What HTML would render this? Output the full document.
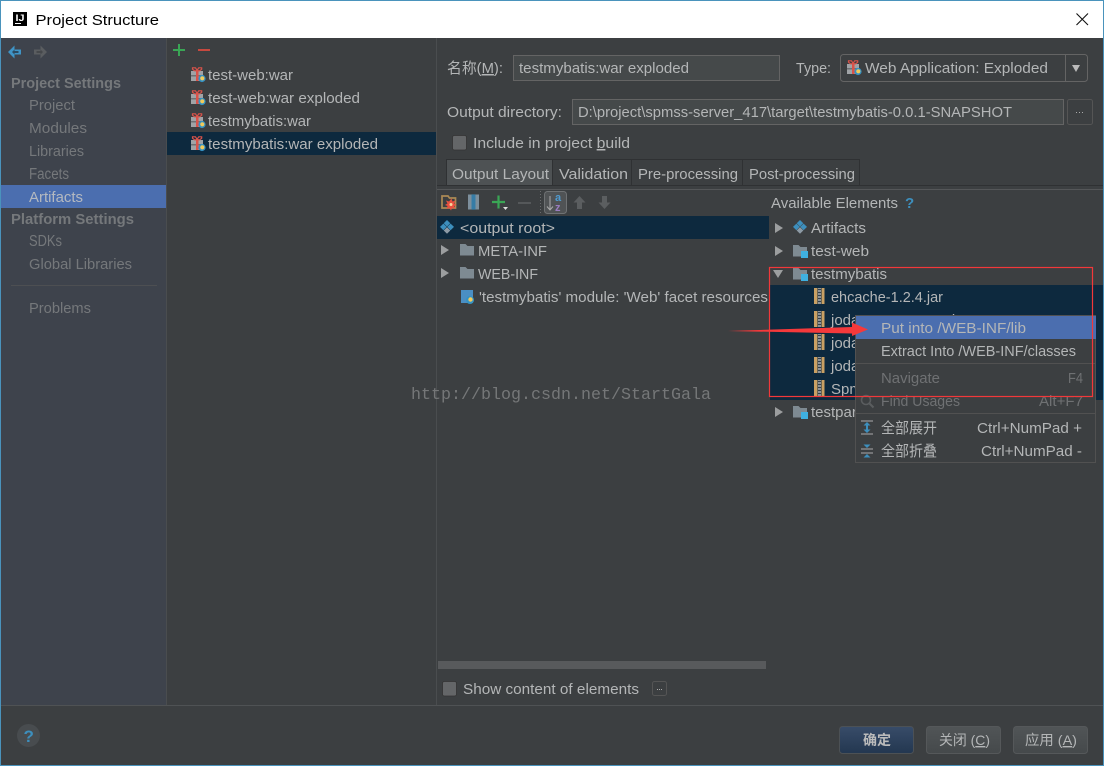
<!DOCTYPE html>
<html><head><meta charset="utf-8"><title>Project Structure</title>
<style>
html,body{margin:0;padding:0;background:#3c3f41;width:1104px;height:766px;overflow:hidden}
svg{display:block}
text{font-family:"Liberation Sans","Noto Sans CJK SC",sans-serif;font-size:15px;fill:#b4b6b7}
.s{fill:#75787b}
.h{fill:#75787b;font-weight:bold}
.d{fill:#6f7173}
</style></head><body>
<svg width="1104" height="766" viewBox="0 0 1104 766" xmlns="http://www.w3.org/2000/svg">
<defs>
<g id="gift">
<rect x="0" y="4" width="12" height="10" fill="#a0a3a6"/>
<rect x="0" y="8" width="12" height="1.500" fill="#6e7073"/>
<rect x="5" y="3" width="2.500" height="11" fill="#d9534a"/>
<path d="M1.500 0.800h3l1.600 2.600 1.600-2.600h3v1.400l-2 1.600h-5.200l-2-1.600z" fill="none" stroke="#d9534a" stroke-width="1.200"/>
<circle cx="11" cy="11.500" r="3.600" fill="#3592c4"/>
<circle cx="11.300" cy="11.300" r="2.100" fill="#f2ca5b"/>
</g>
<g id="dia">
<path d="M7 0l3.300 3.300L7 6.600 3.700 3.300z" fill="#3d8fbd"/>
<path d="M3.400 3.600l3.300 3.300-3.300 3.300L0 6.900z" fill="#3d8fbd"/>
<path d="M10.600 3.600l3.400 3.300-3.400 3.300-3.300-3.300z" fill="#3d8fbd"/>
<path d="M7 7.200l3.300 3.300L7 13.800l-3.300-3.300z" fill="#8d9aa5"/>
</g>
<path id="fold" d="M0 0h5.500l2 2H14v9.500H0z" fill="#7e8a92"/>
<g id="mod"><path d="M0 0h5.500l2 2H14v9.500H0z" fill="#7e8a92"/><rect x="8" y="6" width="7" height="7" fill="#3fb0e0"/></g>
<g id="jar"><rect x="0" y="0" width="3.500" height="16" fill="#c9a063"/><rect x="4" y="0" width="3" height="16" fill="#8f9396"/><path d="M4 1.500h3M4 4.500h3M4 7.500h3M4 10.500h3M4 13.500h3" stroke="#33404a" fill="none"/><rect x="7.500" y="0" width="3" height="16" fill="#c9a063"/></g>
<path id="tr" d="M0 0l8 5-8 5z" fill="#9c9e9f"/>
</defs>

<!-- window -->
<rect width="1104" height="766" fill="#3c3f41"/>
<rect x="0" y="0" width="1104" height="38" fill="#ffffff"/>
<rect x="13" y="12" width="14" height="14" fill="#000"/>
<text x="15.500" y="21" style="font-size:9px;font-weight:bold;fill:#fff" textLength="9" lengthAdjust="spacingAndGlyphs">IJ</text>
<rect x="15" y="23" width="6" height="1" fill="#fff"/>
<text x="35.500" y="25" style="fill:#000" textLength="123.500" lengthAdjust="spacingAndGlyphs">Project Structure</text>
<path d="M1076.500 13.500l11.500 11.500M1088 13.500l-11.500 11.500" stroke="#111" stroke-width="1.100" fill="none"/>

<!-- sidebar -->
<rect x="1" y="38" width="165" height="667" fill="#3e434c"/>
<rect x="166" y="38" width="1" height="667" fill="#4a4d4f"/>
<rect x="1" y="185" width="165" height="23" fill="#4b6eaf"/>
<path d="M8 52l6.500-6.500v4h6.500v5h-6.500v4z" fill="#3f94c6"/><path d="M12 52l2.500-2.500v1.500h4v2h-4v1.500z" fill="#2c4a60"/>
<path d="M47 52l-6.500-6.500v4h-6.500v5h6.500v4z" fill="#5a5d60"/><path d="M43 52l-2.500-2.500v1.500h-4v2h4v1.500z" fill="#45484b"/>
<text class="h" x="11" y="88" textLength="110" lengthAdjust="spacingAndGlyphs">Project Settings</text>
<text class="s" x="29" y="110" textLength="46" lengthAdjust="spacingAndGlyphs">Project</text>
<text class="s" x="29" y="133" textLength="58" lengthAdjust="spacingAndGlyphs">Modules</text>
<text class="s" x="29" y="156" textLength="55" lengthAdjust="spacingAndGlyphs">Libraries</text>
<text class="s" x="29" y="179" style="font-size:15.500px" textLength="40" lengthAdjust="spacingAndGlyphs">Facets</text>
<text x="29" y="202" style="fill:#b4b9c0" textLength="54" lengthAdjust="spacingAndGlyphs">Artifacts</text>
<text class="h" x="11" y="224" textLength="123" lengthAdjust="spacingAndGlyphs">Platform Settings</text>
<text class="s" x="29" y="246" style="font-size:15.500px" textLength="33" lengthAdjust="spacingAndGlyphs">SDKs</text>
<text class="s" x="29" y="269" textLength="103" lengthAdjust="spacingAndGlyphs">Global Libraries</text>
<rect x="11" y="285" width="146" height="1" fill="#4d4f52"/>
<text class="s" x="29" y="313" textLength="62" lengthAdjust="spacingAndGlyphs">Problems</text>

<!-- middle list -->
<path d="M173 50h12M179 44v12" stroke="#3aa655" stroke-width="2" fill="none"/>
<rect x="198" y="49" width="12" height="2" fill="#c7493f"/>
<rect x="167" y="132" width="269" height="23" fill="#0d293e"/>
<use href="#gift" x="191" y="67"/><use href="#gift" x="191" y="90"/><use href="#gift" x="191" y="113"/><use href="#gift" x="191" y="136"/>
<text x="208" y="80" textLength="85" lengthAdjust="spacingAndGlyphs">test-web:war</text>
<text x="208" y="103" textLength="152" lengthAdjust="spacingAndGlyphs">test-web:war exploded</text>
<text x="208" y="126" textLength="103" lengthAdjust="spacingAndGlyphs">testmybatis:war</text>
<text x="208" y="149" textLength="170" lengthAdjust="spacingAndGlyphs">testmybatis:war exploded</text>
<rect x="436" y="38" width="1" height="667" fill="#4a4d4f"/>

<!-- form -->
<text x="447" y="73" textLength="56" lengthAdjust="spacingAndGlyphs">名称(<tspan style="text-decoration:underline">M</tspan>):</text>
<rect x="513.500" y="55.500" width="266" height="25" fill="#45494a" stroke="#646464"/>
<text x="519" y="73" textLength="170" lengthAdjust="spacingAndGlyphs">testmybatis:war exploded</text>
<text x="796" y="73" textLength="35" lengthAdjust="spacingAndGlyphs">Type:</text>
<rect x="840.500" y="54.500" width="247" height="27" rx="3" fill="#3c3f41" stroke="#646464"/>
<rect x="1065" y="55" width="1" height="26" fill="#646464"/>
<use href="#gift" x="847" y="60"/>
<text x="865" y="73" textLength="183" lengthAdjust="spacingAndGlyphs">Web Application: Exploded</text>
<path d="M1072 65h8l-4 7z" fill="#bbbbbb"/>
<text x="447" y="117" textLength="115" lengthAdjust="spacingAndGlyphs">Output directory:</text>
<rect x="572.500" y="99.500" width="491" height="25" fill="#45494a" stroke="#646464"/>
<text x="578" y="117" textLength="434" lengthAdjust="spacingAndGlyphs">D:\project\spmss-server_417\target\testmybatis-0.0.1-SNAPSHOT</text>
<rect x="1067.500" y="99.500" width="25" height="25" rx="2" fill="#3c3f41" stroke="#555"/>
<rect x="1076" y="112" width="1" height="1" fill="#aaa"/><rect x="1079" y="112" width="1" height="1" fill="#aaa"/><rect x="1082" y="112" width="1" height="1" fill="#aaa"/>
<rect x="452.500" y="135.500" width="14" height="14.500" rx="2" fill="#646668" stroke="#333" stroke-width=".8"/>
<text x="473" y="148" textLength="157" lengthAdjust="spacingAndGlyphs">Include in project <tspan style="text-decoration:underline">b</tspan>uild</text>

<!-- tabs -->
<rect x="446.500" y="159.500" width="106" height="26" fill="#4e5254" stroke="#2f3133"/>
<rect x="552.500" y="159.500" width="79" height="26" fill="#3c3f41" stroke="#2f3133"/>
<rect x="631.500" y="159.500" width="111" height="26" fill="#3c3f41" stroke="#2f3133"/>
<rect x="742.500" y="159.500" width="117" height="26" fill="#3c3f41" stroke="#2f3133"/>
<rect x="437" y="185" width="667" height="1" fill="#2f3133"/>
<rect x="437" y="189" width="667" height="1" fill="#555759"/>
<text x="452" y="179" textLength="97" lengthAdjust="spacingAndGlyphs">Output Layout</text>
<text x="559" y="179" textLength="69" lengthAdjust="spacingAndGlyphs">Validation</text>
<text x="638" y="179" textLength="100" lengthAdjust="spacingAndGlyphs">Pre-processing</text>
<text x="749" y="179" textLength="106" lengthAdjust="spacingAndGlyphs">Post-processing</text>

<!-- toolbar -->
<path d="M442 196h6l1.500 2h6v10h-13.500z" fill="#3c3f41" stroke="#ab8a55" stroke-width="1.700"/>
<path d="M451.500 198.500l1 3 3-1-1.500 3 2.500 1.500-2.500 1 1 3-3-1-1 2.500-1.500-2.500-3 1 1-3-2.500-1 2.500-1.500-1.500-3 3 1z" fill="#e8503f"/>
<circle cx="451" cy="204.500" r="1.500" fill="#f7d9a0"/>
<rect x="468" y="194.500" width="3.500" height="15" fill="#7d8f9c"/><rect x="471.500" y="194.500" width="4" height="15" fill="#3d8fbd"/><path d="M471.500 196h4M471.500 198h4M471.500 200h4M471.500 202h4M471.500 204h4M471.500 206h4M471.500 208h4" stroke="#2b5f80" stroke-width=".8" fill="none"/><rect x="475.500" y="194.500" width="3.500" height="15" fill="#7d8f9c"/>
<path d="M492 202h13M498.500 195.500v13" stroke="#3aa655" stroke-width="2.200" fill="none"/>
<path d="M503 207h5l-2.500 3z" fill="#ddd"/>
<rect x="518" y="202" width="13" height="2" fill="#55585a"/>
<path d="M540.500 191v23" stroke="#6a6c6e" stroke-dasharray="1 2" fill="none"/>
<rect x="544.500" y="191.500" width="22" height="22" rx="3" fill="#505355" stroke="#6f7274"/>
<path d="M550 196v14M547 206.500l3 3.500 3-3.500" stroke="#aaa" fill="none"/>
<text x="555" y="201" style="font-size:11px;fill:#4f9bd0;font-weight:bold">a</text>
<text x="555" y="211" style="font-size:11px;fill:#9a7cc0;font-weight:bold">z</text>
<path d="M579.500 196l6 6.500h-3.500v6.500h-5v-6.500h-3.500z" fill="#5b5e60"/>
<path d="M604.500 209l6-6.500h-3.500v-6.500h-5v6.500h-3.500z" fill="#5b5e60"/>
<text x="771" y="208" textLength="127" lengthAdjust="spacingAndGlyphs">Available Elements</text>
<text x="905" y="208" style="font-size:15px;font-weight:bold;fill:#3d8fbd">?</text>

<!-- left tree -->
<rect x="437" y="216" width="332" height="23" fill="#0d293e"/>
<use href="#dia" x="440" y="220"/>
<text x="460" y="233" textLength="95" lengthAdjust="spacingAndGlyphs">&lt;output root&gt;</text>
<use href="#tr" x="441" y="245"/><use href="#fold" x="460" y="244"/>
<text x="478" y="256" textLength="69" lengthAdjust="spacingAndGlyphs">META-INF</text>
<use href="#tr" x="441" y="268"/><use href="#fold" x="460" y="267"/>
<text x="478" y="279" textLength="60" lengthAdjust="spacingAndGlyphs">WEB-INF</text>
<rect x="461" y="290" width="12" height="13" fill="#4a8fc4"/><circle cx="470" cy="300" r="4" fill="#3592c4"/><circle cx="470.500" cy="299.500" r="2.200" fill="#f2ca5b"/>
<text x="479" y="302" textLength="289" lengthAdjust="spacingAndGlyphs">'testmybatis' module: 'Web' facet resources</text>

<!-- right tree -->
<use href="#tr" x="775" y="223"/><use href="#dia" x="793" y="220"/>
<text x="811" y="233" textLength="55" lengthAdjust="spacingAndGlyphs">Artifacts</text>
<use href="#tr" x="775" y="246"/><use href="#mod" x="793" y="245"/>
<text x="811" y="256" textLength="58" lengthAdjust="spacingAndGlyphs">test-web</text>
<path d="M773 270h10l-5 8z" fill="#9c9e9f"/><use href="#mod" x="793" y="268"/>
<text x="811" y="279" textLength="76" lengthAdjust="spacingAndGlyphs">testmybatis</text>
<rect x="770" y="285" width="334" height="115" fill="#0d293e"/>
<use href="#jar" x="814" y="288"/><use href="#jar" x="814" y="311"/><use href="#jar" x="814" y="334"/><use href="#jar" x="814" y="357"/><use href="#jar" x="814" y="380"/>
<text x="831" y="302" textLength="112" lengthAdjust="spacingAndGlyphs">ehcache-1.2.4.jar</text>
<text x="831" y="325">joda-money-0.9.1.jar</text>
<text x="831" y="348">joda-time-2.9.jar</text>
<text x="831" y="371">joda-convert-1.2.jar</text>
<text x="831" y="394">Spmss-core.jar</text>
<use href="#tr" x="775" y="407"/><use href="#mod" x="793" y="406"/>
<text x="811" y="417">testparent</text>

<!-- popup -->
<rect x="855.500" y="315.500" width="240" height="147" fill="#3c3f41" stroke="#515151"/>
<rect x="856" y="316" width="240" height="23" fill="#4b6eaf"/>
<text x="881" y="333" textLength="145" lengthAdjust="spacingAndGlyphs">Put into /WEB-INF/lib</text>
<text x="881" y="356" textLength="195" lengthAdjust="spacingAndGlyphs">Extract Into /WEB-INF/classes</text>
<rect x="856" y="363" width="239" height="1" fill="#515151"/>
<text class="d" x="881" y="383" textLength="59" lengthAdjust="spacingAndGlyphs">Navigate</text>
<text class="d" x="1068" y="383" textLength="15" lengthAdjust="spacingAndGlyphs">F4</text>
<circle cx="866" cy="400" r="4.500" fill="none" stroke="#5a5d5f" stroke-width="1.600"/><path d="M869.500 403.500l4 4" stroke="#5a5d5f" stroke-width="2"/>
<text class="d" x="881" y="406" textLength="79" lengthAdjust="spacingAndGlyphs">Find Usages</text>
<text class="d" x="1039" y="406" textLength="44" lengthAdjust="spacingAndGlyphs">Alt+F7</text>
<rect x="856" y="413" width="239" height="1" fill="#515151"/>
<path d="M861 421h12M861 434h12" stroke="#aaa" fill="none"/>
<path d="M867 422l3.500 3.500h-7zM867 433l3.500-3.500h-7z" fill="#3d8fbd"/><rect x="866" y="425" width="2" height="5" fill="#3d8fbd"/>
<text x="881" y="433" textLength="56" lengthAdjust="spacingAndGlyphs">全部展开</text>
<text x="977" y="433" textLength="105" lengthAdjust="spacingAndGlyphs">Ctrl+NumPad +</text>
<path d="M861 449h12M861 453h12" stroke="#aaa" fill="none"/>
<path d="M867 448l3.500-3.500h-7zM867 454l3.500 3.500h-7z" fill="#3d8fbd"/>
<text x="881" y="456" textLength="56" lengthAdjust="spacingAndGlyphs">全部折叠</text>
<text x="981" y="456" textLength="101" lengthAdjust="spacingAndGlyphs">Ctrl+NumPad -</text>

<!-- annotations -->
<rect x="769.500" y="267.500" width="323" height="129" fill="none" stroke="#f2383a" stroke-width="1.200"/>
<path d="M728 331L852 327V322.500L868 329.500L852 336V333.500z" fill="#f5393b"/>
<text x="411" y="399" style="font-family:'Liberation Mono',monospace;font-size:17px;fill:#757778" textLength="300" lengthAdjust="spacingAndGlyphs">http://blog.csdn.net/StartGala</text>

<!-- bottom of panel -->
<rect x="438" y="661" width="328" height="8" fill="#585a5c"/>
<rect x="442.500" y="681.500" width="14" height="14.500" rx="2" fill="#646668" stroke="#333" stroke-width=".8"/>
<text x="463" y="694" textLength="176" lengthAdjust="spacingAndGlyphs">Show content of elements</text>
<rect x="652.500" y="681.500" width="14" height="14" rx="2" fill="#3c3f41" stroke="#555"/>
<rect x="657" y="689" width="1" height="1" fill="#aaa"/><rect x="659" y="689" width="1" height="1" fill="#aaa"/><rect x="661" y="689" width="1" height="1" fill="#aaa"/>
<rect x="1" y="705" width="1102" height="1" fill="#4f5254"/>

<!-- footer -->
<circle cx="28.500" cy="735.500" r="11.500" fill="#484c4f"/>
<text x="23.500" y="742" style="font-size:17px;font-weight:bold;fill:#3d8fbd">?</text>
<defs><linearGradient id="bl" x1="0" y1="0" x2="0" y2="1"><stop offset="0" stop-color="#384c69"/><stop offset="1" stop-color="#233750"/></linearGradient>
<linearGradient id="gr" x1="0" y1="0" x2="0" y2="1"><stop offset="0" stop-color="#515557"/><stop offset="1" stop-color="#45494b"/></linearGradient></defs>
<rect x="839.500" y="726.500" width="74" height="27" rx="3" fill="url(#bl)" stroke="#4c5155"/>
<text x="863" y="745" style="font-size:14px;font-weight:bold;fill:#bbbbbb" textLength="28" lengthAdjust="spacingAndGlyphs">确定</text>
<rect x="926.500" y="726.500" width="74" height="27" rx="3" fill="url(#gr)" stroke="#55585a"/>
<text x="939" y="745" style="font-size:14px" textLength="51" lengthAdjust="spacingAndGlyphs">关闭 (<tspan style="text-decoration:underline">C</tspan>)</text>
<rect x="1013.500" y="726.500" width="74" height="27" rx="3" fill="url(#gr)" stroke="#55585a"/>
<text x="1025" y="745" style="font-size:14px" textLength="52" lengthAdjust="spacingAndGlyphs">应用 (<tspan style="text-decoration:underline">A</tspan>)</text>

<!-- window border -->
<rect x="0.500" y="0.500" width="1103" height="765" fill="none" stroke="#4a93bc"/>
</svg>
</body></html>
